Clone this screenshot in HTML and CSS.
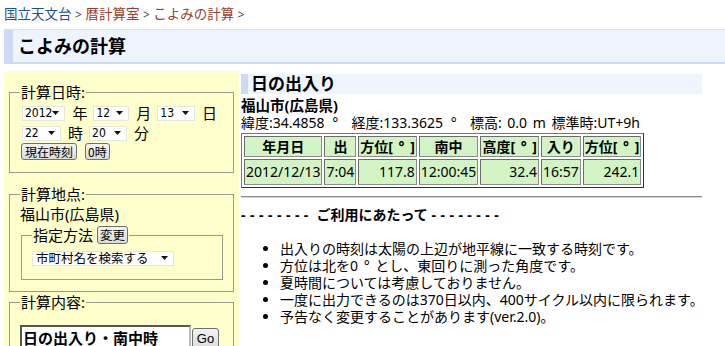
FILE: index.html
```html
<!DOCTYPE html>
<html lang="ja">
<head>
<meta charset="utf-8">
<title>こよみの計算</title>
<link rel="stylesheet" href="styles.css">
</head>
<body>
<div class="crumbs"><span class="c1">国立天文台</span> <span class="gt">&gt;</span> <span class="c2">暦計算室</span> <span class="gt">&gt;</span> <span class="c2">こよみの計算</span> <span class="gt">&gt;</span></div>
<h1 class="pagetitle">こよみの計算</h1>
<div class="layout">
  <aside class="side">
    <fieldset class="fs fs-date">
      <legend>計算日時:</legend>
      <div class="row row-first">
        <span class="sel w46"><span class="v">2012</span><svg class="arr" width="7" height="4" viewBox="0 0 7 4"><path d="M0 0H7L3.5 4Z"/></svg></span><span class="lbl">年</span><span class="sel w38"><span class="v">12</span><svg class="arr" width="7" height="4" viewBox="0 0 7 4"><path d="M0 0H7L3.5 4Z"/></svg></span><span class="lbl">月</span><span class="sel w40"><span class="v">13</span><svg class="arr" width="7" height="4" viewBox="0 0 7 4"><path d="M0 0H7L3.5 4Z"/></svg></span><span class="lbl">日</span>
      </div>
      <div class="row">
        <span class="sel w39"><span class="v">22</span><svg class="arr" width="7" height="4" viewBox="0 0 7 4"><path d="M0 0H7L3.5 4Z"/></svg></span><span class="lbl">時</span><span class="sel w38"><span class="v">20</span><svg class="arr" width="7" height="4" viewBox="0 0 7 4"><path d="M0 0H7L3.5 4Z"/></svg></span><span class="lbl">分</span>
      </div>
      <div class="row row-btn">
        <span class="btn">現在時刻</span><span class="btn btn-zero">0時</span>
      </div>
    </fieldset>

    <fieldset class="fs fs-place">
      <legend>計算地点:</legend>
      <div class="place">福山市(広島県)</div>
      <fieldset class="fs inner">
        <legend>指定方法 <span class="btn btn-chg">変更</span></legend>
        <div class="row row-city">
          <span class="sel w141"><span class="v">市町村名を検索する</span><svg class="arr" width="7" height="4" viewBox="0 0 7 4"><path d="M0 0H7L3.5 4Z"/></svg></span>
        </div>
      </fieldset>
    </fieldset>

    <fieldset class="fs fs-kind">
      <legend>計算内容:</legend>
      <div class="kind-row">
        <span class="kindbox">日の出入り・南中時</span><span class="btn btn-go">Go</span>
      </div>
    </fieldset>
  </aside>

  <main class="main">
    <h2 class="sect">日の出入り</h2>
    <div class="city">福山市(広島県)</div>
    <div class="coords">緯度:34.4858 <span class="deg">°</span>&nbsp; 経度:133.3625 <span class="deg">°</span>&nbsp; 標高: 0.0 m 標準時:UT+9h</div>
    <table class="res">
      <tr>
        <th>年月日</th><th>出</th><th>方位[ <span class="deg">°</span> ]</th><th>南中</th><th>高度[ <span class="deg">°</span> ]</th><th>入り</th><th>方位[ <span class="deg">°</span> ]</th>
      </tr>
      <tr>
        <td>2012/12/13</td><td>7:04</td><td class="num">117.8</td><td>12:00:45</td><td class="num">32.4</td><td>16:57</td><td class="num">242.1</td>
      </tr>
    </table>
    <hr class="rule">
    <div class="notice"><span class="dash">--------</span> ご利用にあたって <span class="dash">--------</span></div>
    <ul class="notes">
      <li>出入りの時刻は太陽の上辺が地平線に一致する時刻です。</li>
      <li>方位は北を0 <span class="deg">°</span> とし、東回りに測った角度です。</li>
      <li>夏時間については考慮しておりません。</li>
      <li>一度に出力できるのは370日以内、400サイクル以内に限られます。</li>
      <li>予告なく変更することがあります(ver.2.0)。</li>
    </ul>
  </main>
</div>
</body>
</html>
```

FILE: styles.css
```css
html, body {
  margin: 0;
  padding: 0;
  background: #ffffff;
}
body {
  font-family: "Noto Sans", "Noto Sans CJK JP", sans-serif;
  color: #000;
  font-size: 14px;
  overflow: hidden;
}

.crumbs {
  padding: 6px 0 0 4px;
  font-size: 13.5px;
  line-height: 16px;
  height: 16px;
  white-space: nowrap;
}
.c1 { color: #1d4f9f; }
.c2 { color: #9c3d2c; }
.gt { color: #444; font-size: 12px; }

.pagetitle {
  margin: 7px 0 0 4px;
  padding: 4px 0 4px 5px;
  border-top: 1px solid #d9e5f6;
  border-bottom: 2px solid #cbdbf2;
  border-left: 9px solid #cbdbf2;
  background: #eef4fd;
  font-size: 18px;
  line-height: 24px;
  font-weight: bold;
}

.layout {
  display: flex;
  align-items: flex-start;
  margin-top: 7px;
  padding-left: 4px;
}

.side {
  width: 225px;
  flex: none;
  background: #ffffcc;
  padding: 12px 5px 40px 5px;
}

.fs {
  margin: 0;
  border: 1px solid #9a9a8a;
  padding: 0 10px 12px 10px;
  min-width: 0;
}
.fs > legend {
  padding: 0 1px;
  font-size: 15px;
  line-height: 18px;
}

.row {
  display: flex;
  align-items: center;
  height: 20px;
  font-size: 15px;
  padding-left: 2px;
}
.row-first { margin-top: 2px; }
.row-btn { height: 17px; padding-left: 1px; margin-top: 0; }

.sel {
  display: inline-flex;
  align-items: center;
  justify-content: space-between;
  box-sizing: border-box;
  height: 15px;
  background: #fff;
  border: 1px solid #e6e6dc;
  padding: 0 5px 0 2px;
  font-size: 12px;
  line-height: 12px;
  font-family: "DejaVu Sans Condensed", "Noto Sans CJK JP", sans-serif;
}
.sel .arr { flex: none; fill: #111; }
.w46 { width: 46px; }
.w38 { width: 38px; }
.w40 { width: 40px; }
.w39 { width: 39px; }
.w141 { width: 142px; }

.lbl {
  margin: 0 6px 0 7px;
  line-height: 20px;
}

.btn {
  display: inline-flex;
  align-items: center;
  justify-content: center;
  box-sizing: border-box;
  height: 17px;
  padding: 0 3px;
  border: 1px solid #707070;
  border-radius: 3px;
  background: linear-gradient(#f2f2f2, #dcdcdc);
  font-family: "Noto Sans CJK JP", sans-serif;
  font-size: 12px;
  line-height: 14px;
  color: #000;
}
.btn-zero { margin-left: 8px; padding: 0 2px; }

.fs-place { margin-top: 12px; padding-bottom: 11px; }
.place {
  margin-top: 1px;
  font-size: 15px;
  line-height: 20px;
}
.inner {
  margin: 1px 0 0 1px;
  padding: 0 10px 11px 10px;
}
.inner > legend {
  line-height: 20px;
}
.btn-chg { height: 18px; vertical-align: top; margin-top: 1px; padding: 0 2px; font-size: 12.5px; }
.row-city { margin-top: 3px; padding-left: 0; }
.row-city .sel { font-family: "Noto Sans CJK JP", sans-serif; font-size: 12.5px; height: 15px; padding-left: 3px; }

.fs-kind { margin-top: 1px; padding-bottom: 20px; }
.kind-row {
  display: flex;
  align-items: flex-start;
  margin-top: 14px;
}
.kindbox {
  box-sizing: border-box;
  width: 171px;
  height: 26px;
  background: #fff;
  border: 2px solid #555;
  border-right-color: #bbb;
  border-bottom-color: #bbb;
  padding: 0 0 0 1px;
  font-family: "Noto Sans CJK JP", sans-serif;
  font-size: 15px;
  font-weight: bold;
  line-height: 22px;
}
.btn-go {
  margin-left: 1px;
  margin-top: 3px;
  width: 27px;
  height: 22px;
  font-size: 13px;
  font-family: "Liberation Sans", sans-serif;
}

.main {
  margin-left: 2px;
  width: 461px;
  padding-top: 3px;
}
.sect {
  margin: 0;
  padding-left: 3px;
  border-left: 7px solid #cbdbf2;
  background: #eef4fd;
  font-size: 17px;
  line-height: 20px;
  font-weight: bold;
}
.city {
  margin-top: 2px;
  font-size: 14.5px;
  line-height: 18px;
  font-weight: bold;
}
.coords {
  font-size: 14px;
  line-height: 18px;
  white-space: nowrap;
  word-spacing: 2px;
}
.deg {
  display: inline-block;
  width: 10px;
  text-align: center;
}

.res {
  margin-top: 1px;
  border-collapse: separate;
  border-spacing: 2px;
  border: 1px solid #333;
  border-top-color: #777;
  border-left-color: #777;
  background: #fff;
}
.res th, .res td {
  background: #d2f4c4;
  border: 1px solid #8c8c8c;
  border-top-color: #6c6c6c;
  border-left-color: #6c6c6c;
  padding: 0 1px;
  white-space: nowrap;
}
.res th {
  font-size: 14px;
  line-height: 19px;
  font-weight: bold;
  text-align: center;
}
.res td {
  font-size: 14px;
  line-height: 24px;
  text-align: left;
}
.res td.num { text-align: right; }

.rule {
  margin: 8px 0 0 0;
  border: 0;
  border-top: 1px solid #8a8a8a;
  border-bottom: 1px solid #d8d8d8;
  height: 0;
}
.notice {
  margin-top: 8px;
  font-size: 14px;
  line-height: 18px;
  font-weight: bold;
  white-space: nowrap;
}
.dash { letter-spacing: 4.5px; }
.notes {
  margin: 16px 0 0 0;
  padding-left: 39px;
  font-size: 14px;
  line-height: 17px;
  white-space: nowrap;
}
```
